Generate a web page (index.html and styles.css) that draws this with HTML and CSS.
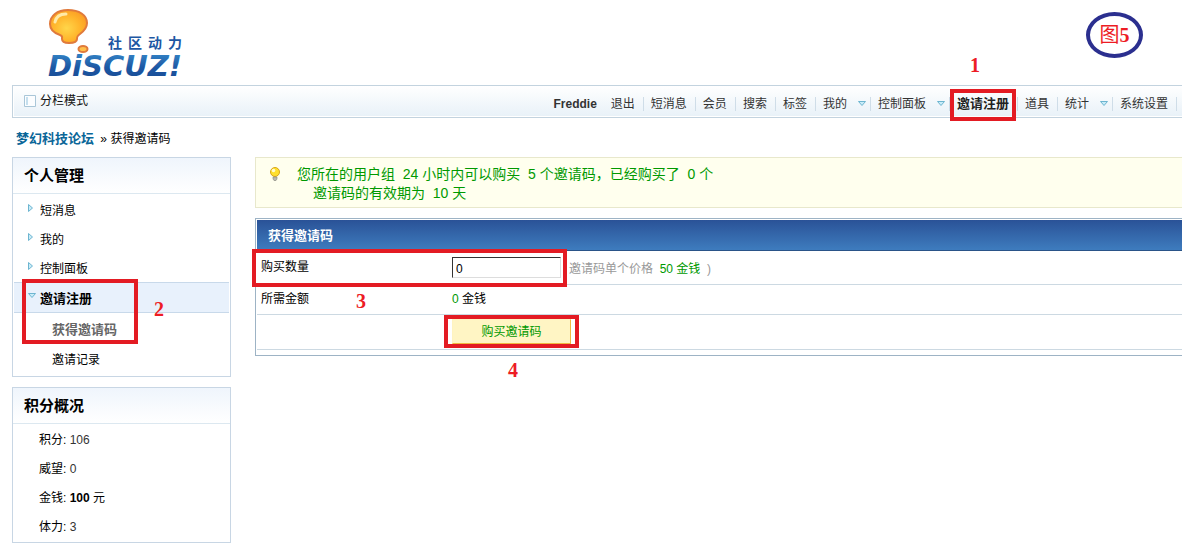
FILE: index.html
```html
<!DOCTYPE html>
<html lang="zh-CN">
<head>
    <meta charset="UTF-8">
    <meta name="viewport" content="width=device-width, initial-scale=1.0">
    <title>梦幻科技论坛 - 获得邀请码</title>
    <link rel="stylesheet" href="styles.css">
</head>
<body>
<div class="wrap">
    <div class="header">
        <a href="#" class="logo">
            <svg width="140" height="76" viewBox="0 0 140 76" role="img" aria-label="Discuz! 社区动力">
                <defs>
                    <radialGradient id="bulb" cx="0.45" cy="0.55" r="0.6">
                        <stop offset="0" stop-color="#ffd64a"/>
                        <stop offset="0.6" stop-color="#ffb52c"/>
                        <stop offset="1" stop-color="#fb9d24"/>
                    </radialGradient>
                    <linearGradient id="word" x1="0" y1="0" x2="0" y2="1">
                        <stop offset="0.2" stop-color="#2f7cc0"/>
                        <stop offset="0.55" stop-color="#1d57a3"/>
                        <stop offset="1" stop-color="#174a92"/>
                    </linearGradient>
                </defs>
                <path d="M20 3C9 3 2 9 2 17c0 6 4 9 10 11 3 1 2 2 2 4 0 3 3 4 7 4s8-1 8-4c0-2 0-3 3-5 4-3 7-6 7-11C39 8 31 3 20 3z" fill="url(#bulb)" stroke="#e07a3c" stroke-width="2"/>
                <path d="M7 15c1-5 5-8 11-8" fill="none" stroke="#ffeaa8" stroke-width="3" stroke-linecap="round"/>
                <ellipse cx="35" cy="42" rx="4.500" ry="3" fill="#ffc04a" stroke="#e07a3c" stroke-width="2"/>
                <text x="0" y="69" class="logo_word" fill="url(#word)">DiSCUZ!</text>
                <text x="60 80 100 120" y="41" class="logo_sub">社区动力</text>
            </svg>
        </a>
        <div class="figure_no">图<b>5</b></div>
    </div>

    <div class="menu">
        <button type="button" class="frame_switch">
            <svg width="12" height="12" viewBox="0 0 12 12"><path d="M.5.5h11v11H.5z" fill="#fbfdff" stroke="#a9c6d8"/><path d="M2 2h2v8H2z" fill="#c5dfee"/></svg>
            分栏模式
        </button>
        <ul class="nav">
            <li class="user"><a href="#">Freddie</a></li>
            <li><a href="#">退出</a></li>
            <li><a href="#">短消息</a></li>
            <li><a href="#">会员</a></li>
            <li><a href="#">搜索</a></li>
            <li><a href="#">标签</a></li>
            <li class="drop"><a href="#">我的</a><svg width="8" height="6" viewBox="0 0 8 6"><path d="M.5.5h7L4 4.500z" fill="#c9ecf8" stroke="#6db5d0"/></svg></li>
            <li class="drop"><a href="#">控制面板</a><svg width="8" height="6" viewBox="0 0 8 6"><path d="M.5.5h7L4 4.500z" fill="#c9ecf8" stroke="#6db5d0"/></svg></li>
            <li class="current"><a href="#">邀请注册</a><span class="mark mark_nav"></span><b class="num num_nav">1</b></li>
            <li><a href="#">道具</a></li>
            <li class="drop"><a href="#">统计</a><svg width="8" height="6" viewBox="0 0 8 6"><path d="M.5.5h7L4 4.500z" fill="#c9ecf8" stroke="#6db5d0"/></svg></li>
            <li><a href="#">系统设置</a></li>
        </ul>
    </div>

    <div class="crumb"><a href="#">梦幻科技论坛</a> <span>»</span> 获得邀请码</div>

    <div class="container">
        <div class="side">
            <div class="box">
                <h2>个人管理</h2>
                <ul class="side_nav">
                    <li><svg width="5" height="8" viewBox="0 0 5 8"><path d="M.5.5v7L4.500 4z" fill="#c9ecf8" stroke="#6db5d0"/></svg><a href="#">短消息</a></li>
                    <li><svg width="5" height="8" viewBox="0 0 5 8"><path d="M.5.5v7L4.500 4z" fill="#c9ecf8" stroke="#6db5d0"/></svg><a href="#">我的</a></li>
                    <li><svg width="5" height="8" viewBox="0 0 5 8"><path d="M.5.5v7L4.500 4z" fill="#c9ecf8" stroke="#6db5d0"/></svg><a href="#">控制面板</a></li>
                    <li class="open"><svg width="8" height="6" viewBox="0 0 8 6"><path d="M.5.5h7L4 4.500z" fill="#c9ecf8" stroke="#6db5d0"/></svg><a href="#">邀请注册</a><span class="mark mark_side"></span><b class="num num_side">2</b></li>
                    <li class="sub on"><a href="#">获得邀请码</a></li>
                    <li class="sub"><a href="#">邀请记录</a></li>
                </ul>
            </div>
            <div class="box">
                <h2>积分概况</h2>
                <ul class="credits">
                    <li>积分: <span>106</span></li>
                    <li>威望: <span>0</span></li>
                    <li>金钱: <b>100</b> 元</li>
                    <li>体力: <span>3</span></li>
                </ul>
            </div>
        </div>

        <div class="content">
            <div class="notice">
                <svg width="12" height="14" viewBox="0 0 12 14">
                    <circle cx="6" cy="5" r="4.500" fill="#ffe02e" stroke="#d8a51c"/>
                    <circle cx="4.500" cy="3.500" r="1.800" fill="#fffbd0"/>
                    <path d="M4 10h4v2l-1 1.500H5L4 12z" fill="#b9b9b0" stroke="#85857c" stroke-width=".6"/>
                </svg>
                <p>您所在的用户组&nbsp; 24 小时内可以购买&nbsp; 5 个邀请码，已经购买了&nbsp; 0 个<br><span>邀请码的有效期为&nbsp; 10 天</span></p>
            </div>

            <form class="mainbox">
                <h1>获得邀请码</h1>
                <table>
                    <tr>
                        <th><label for="amount">购买数量</label></th>
                        <td><div class="field"><input type="text" id="amount" value="0"><span class="tip">邀请码单个价格&nbsp; <em>50 金钱</em>&nbsp; )</span></div></td>
                    </tr>
                    <tr>
                        <th>所需金额</th>
                        <td><em class="cost">0</em> 金钱</td>
                    </tr>
                    <tr>
                        <th></th>
                        <td><div class="submit"><button type="button">购买邀请码</button><span class="mark mark_btn"></span><b class="num num_btn">4</b></div></td>
                    </tr>
                </table>
                <span class="mark mark_row"></span><b class="num num_row">3</b>
            </form>
        </div>
    </div>
</div>
</body>
</html>
```

FILE: styles.css
```css
* {
    box-sizing: border-box;
}
body {
    margin: 0;
    background-color: #fff;
    color: #000;
    font: 12px/20px "Liberation Sans", "Noto Sans CJK SC", sans-serif;
    overflow-x: hidden;
}
ul, h1, h2, p {
    margin: 0;
    padding: 0;
    list-style: none;
}
a {
    color: inherit;
    text-decoration: none;
}
em {
    font-style: normal;
    color: #090;
}
svg {
    display: block;
    flex: none;
}
.wrap {
    padding-left: 12px;
}

/* header */
.header {
    display: flex;
    justify-content: space-between;
    align-items: flex-start;
    height: 85px;
    padding: 7px 39px 0 36px;
}
.logo_word {
    font: italic bold 29px "DejaVu Sans", sans-serif;
}
.logo_sub {
    font: bold 14px "Noto Sans CJK SC", sans-serif;
    fill: #1d57a3;
}
.figure_no {
    display: flex;
    justify-content: center;
    align-items: center;
    width: 57px;
    height: 46px;
    margin-top: 5px;
    border: 4px solid #2b2f8f;
    border-radius: 50%;
    color: #ed1c24;
    font: 20px/20px "Liberation Serif", "Noto Sans CJK SC", serif;
}

/* menu */
.menu {
    display: flex;
    justify-content: space-between;
    height: 33px;
    padding: 0 5px 0 11px;
    border: 1px solid #c3d3df;
    border-right: 0;
    background: linear-gradient(#fff, #e8f1f8);
    box-shadow: inset 1px -1px 0 #fff;
    white-space: nowrap;
}
.frame_switch {
    display: flex;
    align-items: center;
    gap: 4px;
    padding: 0 0 1px;
    border: 0;
    background: none;
    color: #111;
    font: inherit;
}
.nav {
    display: flex;
    align-items: center;
    padding-top: 5px;
    color: #333;
}
.nav li {
    position: relative;
    display: flex;
    align-items: center;
    height: 14px;
    padding: 0 8px 0 7px;
    border-right: 1px solid #cfdde8;
}
.nav .user {
    padding-right: 6px;
    border-color: transparent;
    font-weight: bold;
}
.nav .drop {
    gap: 11px;
    padding-right: 4px;
}
.nav .current {
    color: #222;
    font-size: 13px;
    font-weight: bold;
}

.crumb {
    padding: 11px 4px 8px;
}
.crumb a {
    color: #0a6698;
    font-size: 13px;
    font-weight: bold;
}
.crumb span {
    margin-left: 3px;
}

.container {
    display: grid;
    grid-template-columns: 219px minmax(0, 1fr);
    gap: 24px;
    align-items: start;
}

/* sidebar */
.box {
    margin-bottom: 10px;
    border: 1px solid #c8d6e4;
}
.box h2 {
    height: 36px;
    padding-left: 11px;
    border-bottom: 1px solid #dce8f0;
    background: linear-gradient(#eff5fc, #fff);
    font-size: 15px;
    line-height: 36px;
}
.side_nav {
    padding: 1px 1px 3px;
}
.side_nav li {
    position: relative;
    display: flex;
    align-items: center;
    gap: 7px;
    height: 29px;
    padding: 2px 0 0 14px;
}
.side_nav svg {
    margin-bottom: 6px;
}
.side_nav .open {
    gap: 4px;
    height: 31px;
    border: solid #c8d9ea;
    border-width: 1px 0;
    background-color: #e8f1fc;
    font-size: 13px;
    font-weight: bold;
}
.side_nav .sub {
    padding-left: 38px;
}
.side_nav .on {
    height: 31px;
    color: #666;
    font-size: 13px;
    font-weight: bold;
}
.credits {
    padding: 2px 0 0 26px;
    line-height: 29px;
}
.credits span {
    color: #333;
}

/* content */
.notice {
    display: flex;
    gap: 16px;
    height: 51px;
    margin-bottom: 10px;
    padding: 7px 13px;
    border: 1px solid #e8e8cc;
    border-right: 0;
    background-color: #ffffee;
    color: #090;
    font-size: 14px;
    line-height: 19px;
}
.notice svg {
    margin-top: 2px;
}
.notice span {
    padding-left: 16px;
}
.mainbox {
    position: relative;
    padding: 1px 0 5px 1px;
    border: 1px solid #9db3c5;
    border-right: 0;
}
.mainbox h1 {
    height: 31px;
    padding-left: 11px;
    border-bottom: 1px solid #2a5488;
    background: linear-gradient(#2a5297, #3e7cbe);
    color: #fff;
    font-size: 13px;
    line-height: 31px;
}
.mainbox table {
    width: 100%;
    border-collapse: collapse;
}
.mainbox th, .mainbox td {
    height: 30px;
    padding: 0 4px;
    border-bottom: 1px solid #ccd9e2;
    font-weight: normal;
    text-align: left;
}
.mainbox th {
    width: 191px;
}
.mainbox tr:first-child > * {
    height: 33px;
}
.mainbox tr:last-child > * {
    height: 35px;
}
.field {
    display: flex;
    align-items: center;
    gap: 8px;
}
.field input {
    width: 109px;
    height: 21px;
    padding: 3px 3px 0;
    border: 1px solid #ddd;
    border-top-color: #333;
    border-left-color: #333;
    background-color: #fff;
    font: 12px "Liberation Sans", sans-serif;
}
.tip {
    padding-top: 4px;
    color: #999;
}
.submit {
    position: relative;
    width: 119px;
}
.submit button {
    display: block;
    width: 100%;
    height: 25px;
    padding: 0;
    border: 1px solid #fff3c0;
    border-right-color: #f0b840;
    border-bottom-color: #f0b840;
    background-color: #fff5c4;
    color: #090;
    font: inherit;
}

/* red marks over the steps */
.mark {
    position: absolute;
    border: 4px solid #e31b23;
    pointer-events: none;
}
.num {
    position: absolute;
    color: #ed1c24;
    font: bold 20px/20px "Liberation Serif", serif;
}
.mark_nav {
    top: -8px;
    right: 1px;
    bottom: -10px;
    left: 0;
}
.num_nav {
    top: -42px;
    left: 20px;
}
.mark_side {
    top: -4px;
    left: 8px;
    width: 116px;
    height: 65px;
}
.num_side {
    top: 16px;
    left: 140px;
}
.mark_row {
    top: 30px;
    left: -4px;
    width: 315px;
    height: 38px;
}
.num_row {
    top: 72px;
    left: 100px;
}
.mark_btn {
    top: -4px;
    right: -8px;
    bottom: -4px;
    left: -8px;
}
.num_btn {
    top: 41px;
    left: 56px;
}
```
